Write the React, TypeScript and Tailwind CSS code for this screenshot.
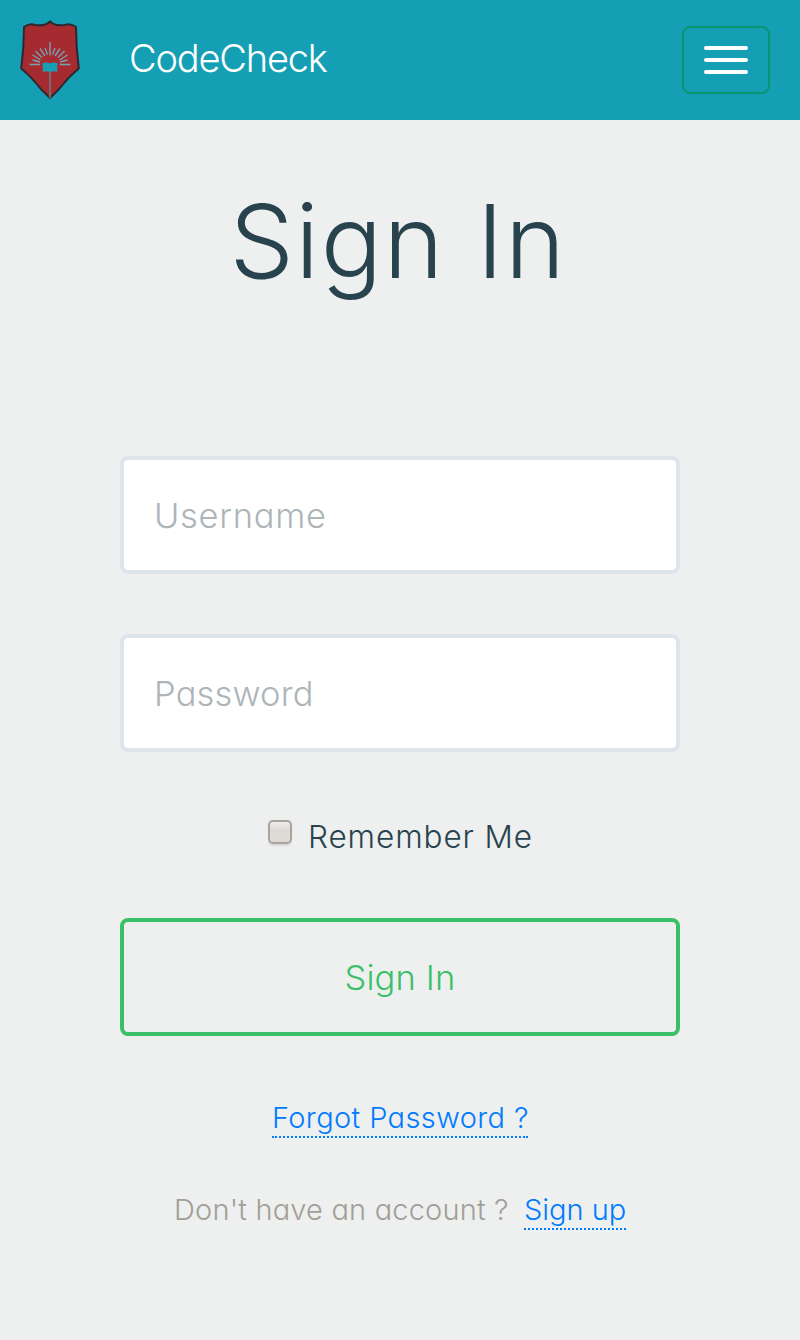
function Crest() {
  return (
    <svg className="ml-[20px] h-[82px] w-[60px] shrink-0" viewBox="0 0 60 82" fill="none">
      <path d="M4 8.500Q10 4 15 6Q25 7.500 30 3Q35 7.500 45 6Q50 4 56 8.500Q56 28 58.800 49.500Q54 54 46 61Q37 68 30 79Q23 68 14 61Q6 54 1.200 49.500Q4 28 4 8.500Z" fill="none" />
      <path d="M4 8Q10 4 15 6Q25 7.500 30 2.500Q35 7.500 45 6Q50 4 56 8Q56 28 58.800 49.500Q50 57 45 63Q39 71 30 79Q21 71 15 63Q10 57 1.200 49.500Q4 28 4 8Z" fill="#a62b31" stroke="#2b292d" strokeWidth="2" strokeLinejoin="round" />
      <g stroke="#74a3af" strokeWidth="1.4">
        <path d="M30 23V36.500M9.500 45.500H20M40 45.500H50.500M12.500 36L20.500 41M47.500 36L39.500 41M15.500 32L22 38.500M44.500 32L38 38.500M20 29.500L25 37M40 29.500L35 37M25 29L27.500 35.500M35 29L32.500 35.500M12.500 41L20 43M47.500 41L40 43" />
      </g>
      <path d="M30 52V79" stroke="#6f7377" strokeWidth="1.800" />
      <path d="M22.500 44Q27 43 30 44.500Q33 43 37.500 44L37 53Q33 51.500 30 53Q27 51.500 23 53Z" fill="#159fb5" />
    </svg>
  );
}

function Field({ type, placeholder, spacing }: { type: string; placeholder: string; spacing: string }) {
  return (
    <input
      type={type}
      placeholder={placeholder}
      className={`block h-[118px] w-[560px] rounded-[8px] border-4 border-[#dde4eb] bg-white pl-[30px] text-[34.5px] outline-none placeholder:text-[#adb5b8] ${spacing}`}
    />
  );
}

export default function App() {
  return (
    <div className="flex min-h-[1340px] flex-col items-center bg-[#edf0ef] font-['Inter',sans-serif] font-light whitespace-nowrap text-[#29434e] [font-feature-settings:'cv11'] [font-optical-sizing:none]">
      <header className="flex h-[120px] w-full items-center bg-[#159fb5] pr-[30px]">
        <Crest />
        <a className="mb-[4px] ml-[49px] text-[38px] leading-[40px] tracking-[-1.2px] text-white">CodeCheck</a>
        <button aria-label="Menu" className="ml-auto flex h-[68px] w-[88px] flex-col items-center justify-center gap-2 rounded-[8px] border-2 border-[#079572]">
          <span className="h-1 w-11 rounded-full bg-white" />
          <span className="h-1 w-11 rounded-full bg-white" />
          <span className="h-1 w-11 rounded-full bg-white" />
        </button>
      </header>
      <h1 className="mr-[4px] h-[242px] text-[102px] leading-[242px] tracking-[1.5px] [word-spacing:1.5px]">Sign In</h1>
      <form className="mt-[94px] flex w-[560px] flex-col items-center">
        <Field type="text" placeholder="Username" spacing="tracking-[0.7px]" />
        <div className="h-[60px]" />
        <Field type="password" placeholder="Password" spacing="tracking-[0.15px]" />
        <label className="mt-[54px] flex h-[60px] w-[264px] items-center text-[31.5px] leading-[60px] tracking-[0.9px]">
          <input type="checkbox" className="mr-[16px] mb-[8px] h-6 w-6 shrink-0 appearance-none rounded-[5px] border-2 border-[#aaa49e] bg-linear-to-b from-[#efeeec] to-[#dedad6] to-40% shadow-[0_2px_1px_#dbd8d5]" />
          <span className="pt-[2px]">Remember Me</span>
        </label>
        <button type="button" className="mt-[52px] h-[118px] w-full rounded-[8px] border-4 border-[#3bbf68] pt-[2px] text-[34.5px] tracking-[0.15px] text-[#3bbf68]">Sign In</button>
      </form>
      <a className="mt-[62px] h-[40px] w-[256px] border-b-2 border-dotted border-[#007bff] text-[29px] leading-[39px] tracking-[0.38px] text-[#007bff]">Forgot Password ?</a>
      <div className="mt-[52px] flex h-[40px] w-[452px] justify-between text-[29px] leading-[39px]">
        <span className="w-[334px] tracking-[0.18px] text-[#a39e97]">Don't have an account ?</span>
        <a className="w-[102px] border-b-2 border-dotted border-[#007bff] text-[#007bff]">Sign up</a>
      </div>
    </div>
  );
}
